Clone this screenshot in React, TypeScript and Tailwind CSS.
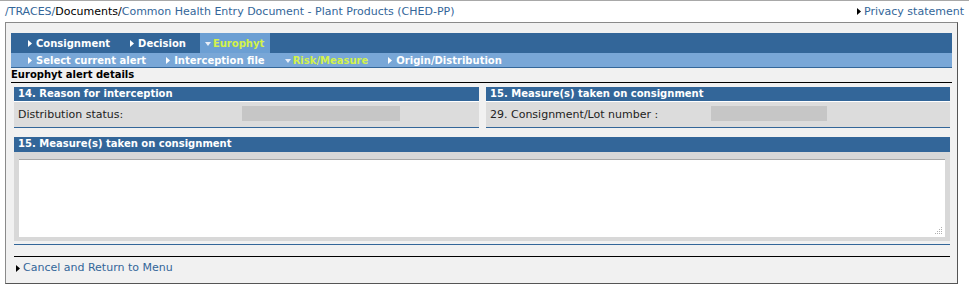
import React from 'react';

const Tri = ({ down = false, color = '#ffffff' }: { down?: boolean; color?: string }) => (
  <svg width="6" height="7" viewBox="0 0 6 7" className="shrink-0">
    {down ? <polygon points="0,2 6,2 3,6" fill={color} /> : <polygon points="0,0 4,3.5 0,7" fill={color} />}
  </svg>
);

const NavItem = ({ label, active = false, down = false }: { label: string; active?: boolean; down?: boolean }) => (
  <div className={`flex items-center gap-[2px] ${active ? 'text-[#d4f24a]' : 'text-white'}`}>
    <Tri down={down} color={down ? '#e8eef8' : '#ffffff'} />
    <span>{label}</span>
  </div>
);

const SectionHeader = ({ title }: { title: string }) => (
  <div className="h-[14px] bg-[#336699] pl-[4px] text-[10px] font-bold leading-[14px] text-white">{title}</div>
);

const FieldRow = ({ label, valueLeft }: { label: string; valueLeft: string }) => (
  <div className="relative h-[27px] border-t border-t-white border-b border-b-[#336699] bg-[#dcdcdc]">
    <span className="absolute left-[4px] top-[6px] text-[11px] leading-[14px] text-[#222]">{label}</span>
    <div className={`absolute top-[4px] h-[15px] bg-[#c6c6c6] ${valueLeft}`} />
  </div>
);

export default function App() {
  return (
    <div className="h-[290px] w-[969px] overflow-hidden border-t border-t-[#a8a8a8] bg-white font-['DejaVu_Sans',sans-serif] text-[11px]">
      {/* Breadcrumb */}
      <div className="flex h-[21px] items-center justify-between pl-[5px] pr-[5px] leading-[14px]">
        <div className="text-[#336699]">
          /TRACES/<span className="text-black">Documents/</span>Common Health Entry Document - Plant Products (CHED-PP)
        </div>
        <div className="flex items-center gap-[1px] text-[#336699]">
          <Tri color="#000000" />
          <span>Privacy statement</span>
        </div>
      </div>

      {/* Main box */}
      <div className="ml-[5px] h-[262px] w-[953px] border border-t-[#8a8a8a] border-l-[#8a8a8a] border-r-[#555] border-b-[#555] bg-[#f1f1f1] pl-[5px] pr-[5px] pt-[10px]">
        {/* Nav level 1 */}
        <div className="flex h-[20px] items-stretch bg-[#336699] pl-[17px] text-[10px] font-bold">
          <div className="flex items-center gap-[20px]">
            <NavItem label="Consignment" />
            <NavItem label="Decision" />
          </div>
          <div className="ml-[14px] flex w-[70px] items-center bg-[#6c9fd3] pl-[5px]">
            <NavItem label="Europhyt" active down />
          </div>
        </div>
        {/* Nav level 2 */}
        <div className="flex h-[15px] items-center gap-[20px] border-b border-b-[#336699] bg-[#79a7d7] pl-[17px] text-[10px] font-bold">
          <NavItem label="Select current alert" />
          <NavItem label="Interception file" />
          <NavItem label="Risk/Measure" active down />
          <NavItem label="Origin/Distribution" />
        </div>

        <div className="h-[15px] border-b border-b-black text-[10px] font-bold leading-[14px] text-black">Europhyt alert details</div>

        <div className="pl-[3px] pr-[2px]">
          <div className="mt-[4px] flex gap-[7px]">
            <div className="w-[465px]">
              <SectionHeader title="14. Reason for interception" />
              <FieldRow label="Distribution status:" valueLeft="left-[228px] w-[158px]" />
            </div>
            <div className="flex-1">
              <SectionHeader title="15. Measure(s) taken on consignment" />
              <FieldRow label="29. Consignment/Lot number :" valueLeft="left-[225px] w-[116px]" />
            </div>
          </div>

          <div className="mt-[9px]">
            <SectionHeader title="15. Measure(s) taken on consignment" />
            <div className="h-[1px] bg-[#336699]" />
            <div className="bg-[#d8d8d8] pb-[4px] pl-[5px] pr-[5px] pt-[7px]">
              <div className="relative h-[78px] border-t border-t-[#a8a8a8] bg-white">
                <svg width="8" height="8" viewBox="0 0 8 8" className="absolute bottom-[2px] right-[2px]">
                  <g fill="#b0b0b0">
                    <rect x="6" y="0" width="1" height="1" />
                    <rect x="4" y="2" width="1" height="1" />
                    <rect x="6" y="2" width="1" height="1" />
                    <rect x="2" y="4" width="1" height="1" />
                    <rect x="4" y="4" width="1" height="1" />
                    <rect x="6" y="4" width="1" height="1" />
                    <rect x="0" y="6" width="1" height="1" />
                    <rect x="2" y="6" width="1" height="1" />
                    <rect x="4" y="6" width="1" height="1" />
                    <rect x="6" y="6" width="1" height="1" />
                  </g>
                </svg>
              </div>
            </div>
            <div className="mt-[3px] h-[1px] bg-[#336699]" />
          </div>

          <div className="mt-[11px] h-[1px] bg-black" />
          <div className="mt-[4px] flex items-center gap-[1px] pl-[2px] leading-[14px] text-[#336699]">
            <Tri color="#000000" />
            <span>Cancel and Return to Menu</span>
          </div>
        </div>
      </div>
    </div>
  );
}
